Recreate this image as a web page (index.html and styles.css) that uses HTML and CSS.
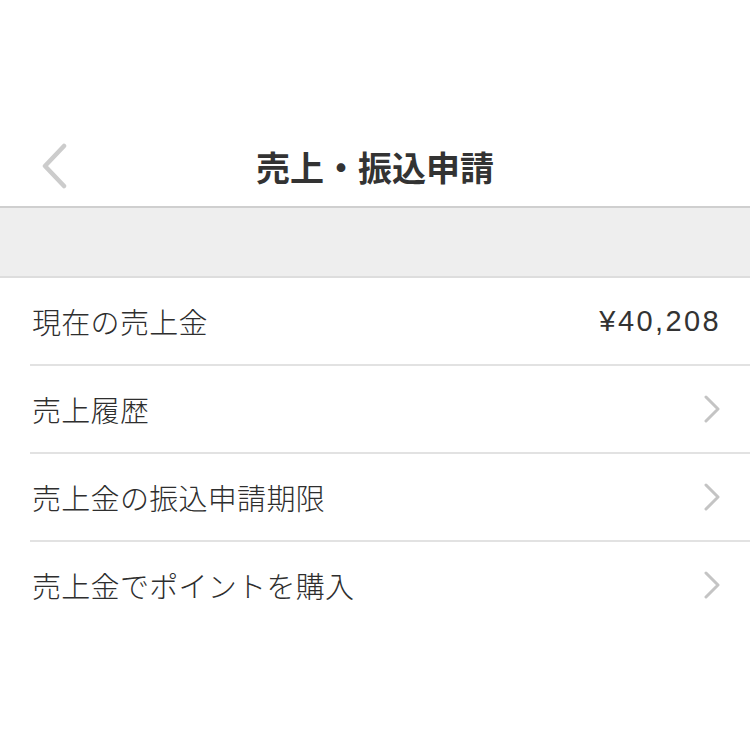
FILE: index.html
```html
<!DOCTYPE html>
<html lang="ja">
<head>
<meta charset="utf-8">
<link rel="stylesheet" href="styles.css">
</head>
<body>
<div class="page">
  <div class="top-space"></div>
  <header class="nav">
    <span class="back">
      <svg width="28" height="46" viewBox="0 0 28 46"><polyline points="24,3 5,23 24,43" fill="none" stroke="#cccccc" stroke-width="4.5" stroke-linecap="round" stroke-linejoin="round"/></svg>
    </span>
    <h1 class="title">売上・振込申請</h1>
  </header>
  <div class="band"></div>
  <ul class="list">
    <li class="row"><span class="label">現在の売上金</span><span class="amount">¥40,208</span></li>
    <li class="row"><span class="label">売上履歴</span><span class="chev"><svg width="18" height="28" viewBox="0 0 18 28"><polyline points="3,2 15,14 3,26" fill="none" stroke="#c4c4c4" stroke-width="3" stroke-linecap="round" stroke-linejoin="round"/></svg></span></li>
    <li class="row"><span class="label">売上金の振込申請期限</span><span class="chev"><svg width="18" height="28" viewBox="0 0 18 28"><polyline points="3,2 15,14 3,26" fill="none" stroke="#c4c4c4" stroke-width="3" stroke-linecap="round" stroke-linejoin="round"/></svg></span></li>
    <li class="row last"><span class="label">売上金でポイントを購入</span><span class="chev"><svg width="18" height="28" viewBox="0 0 18 28"><polyline points="3,2 15,14 3,26" fill="none" stroke="#c4c4c4" stroke-width="3" stroke-linecap="round" stroke-linejoin="round"/></svg></span></li>
  </ul>
</div>
</body>
</html>
```
FILE: styles.css
```css
html, body {
  margin: 0;
  padding: 0;
  background: #ffffff;
}
body {
  font-family: "Noto Sans CJK JP", "Noto Sans", sans-serif;
  color: #3c3c3c;
}
.page {
  width: 750px;
}
.top-space {
  height: 128px;
}
.nav {
  position: relative;
  height: 78px;
  border-bottom: 2px solid #cfcfcf;
  display: flex;
  align-items: center;
  justify-content: center;
}
.back {
  position: absolute;
  left: 40px;
  top: 15px;
  display: flex;
}
.title {
  margin: 0;
  font-size: 34px;
  font-weight: 700;
  color: #333333;
  line-height: 1;
}
.band {
  height: 68px;
  background: #eeeeee;
  border-bottom: 2px solid #dddddd;
}
.list {
  list-style: none;
  margin: 0;
  padding: 0 0 0 30px;
}
.row {
  height: 86px;
  border-bottom: 2px solid #e2e2e2;
  display: flex;
  align-items: center;
  justify-content: space-between;
  padding-left: 2px;
  padding-right: 30px;
}
.row.last {
  border-bottom: none;
}
.label {
  font-size: 29px;
  font-weight: 300;
  letter-spacing: 0.3px;
  color: #2e2e2e;
}
.amount {
  font-family: "Liberation Sans", "Noto Sans CJK JP", sans-serif;
  font-size: 29px;
  font-weight: 400;
  color: #333333;
  letter-spacing: 2.4px;
  margin-right: -1px;
}
.chev {
  display: flex;
  margin-right: -1px;
}
```
